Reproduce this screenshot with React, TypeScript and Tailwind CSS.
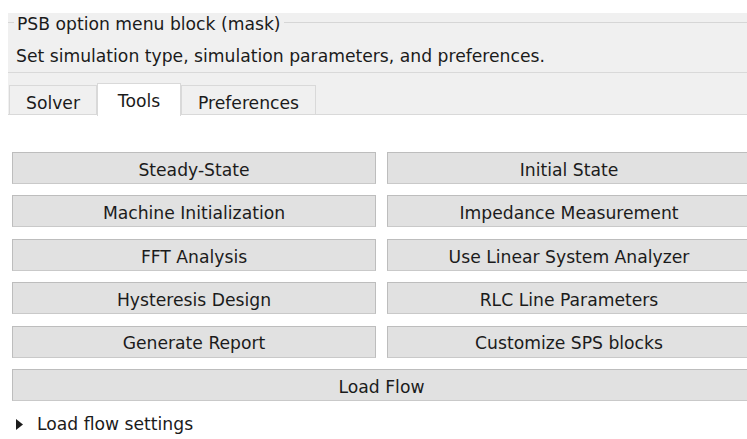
import { useState } from 'react'

const tools: string[][] = [
  ['Steady-State', 'Initial State'],
  ['Machine Initialization', 'Impedance Measurement'],
  ['FFT Analysis', 'Use Linear System Analyzer'],
  ['Hysteresis Design', 'RLC Line Parameters'],
  ['Generate Report', 'Customize SPS blocks'],
]

const tabs = ['Solver', 'Tools', 'Preferences']

function ToolButton({ label, wide }: { label: string; wide?: boolean }) {
  return (
    <button
      className={`h-[32px] pt-[5px] border border-[#bdbdbd] border-b-[#c9c9c9] bg-[#e1e1e1] text-[17.2px] text-[#1b1b1b] leading-none ${
        wide ? 'col-span-2' : ''
      }`}
    >
      {label}
    </button>
  )
}

export default function App() {
  const [active, setActive] = useState('Tools')
  const [open, setOpen] = useState(false)

  return (
    <div
      className="w-[747px] h-[439px] overflow-hidden bg-white text-[#1b1b1b]"
      style={{ fontFamily: '"DejaVu Sans", Tahoma, sans-serif' }}
    >
      {/* mask header group */}
      <div className="ml-[8px] mt-[13px] bg-[#f0f0f0]">
        <div className="flex items-center h-[18px]">
          <div className="w-[6px] h-px bg-[#d6d6d6] mt-[1px]" />
          <span className="px-[3px] pt-[5px] text-[17.2px] leading-none">PSB option menu block (mask)</span>
          <div className="flex-1 h-px bg-[#d6d6d6] mt-[1px]" />
        </div>
        <div className="h-[42px] border-b border-[#d9d9d9] flex items-center pl-[8px] pt-[10px] text-[17.2px]">
          Set simulation type, simulation parameters, and preferences.
        </div>

        {/* tab strip */}
        <div className="h-[42px] flex items-end border-b border-[#d9d9d9]">
          {tabs.map(t =>
            t === active ? (
              <div
                key={t}
                onClick={() => setActive(t)}
                className="h-[33px] -mb-[2px] w-[84px] bg-white border border-b-0 border-[#d9d9d9] flex items-center justify-center text-[17.2px] pt-[4px]"
              >
                {t}
              </div>
            ) : (
              <div
                key={t}
                onClick={() => setActive(t)}
                className={`h-[29px] bg-[#f0f0f0] border border-b-0 border-[#d9d9d9] flex items-center justify-center text-[17.2px] pt-[7px] ${
                  t === 'Solver' ? 'w-[88px] ml-px' : 'w-[135px]'
                }`}
              >
                {t}
              </div>
            )
          )}
        </div>
      </div>

      {/* tool buttons */}
      <div className="ml-[12px] mt-[37px] grid grid-cols-[364px_364px] gap-x-[11px] gap-y-[11.4px]">
        {tools.map(([a, b]) => (
          <>
            <ToolButton key={a} label={a} />
            <ToolButton key={b} label={b} />
          </>
        ))}
        <ToolButton label="Load Flow" wide />
      </div>

      <div
        className="mt-[11px] ml-[16px] flex items-center gap-[14px] text-[17.2px] cursor-pointer"
        onClick={() => setOpen(!open)}
      >
        <svg width="7" height="11" viewBox="0 0 7 11">
          <path d="M0 0 L7 5.5 L0 11 Z" fill="#1b1b1b" />
        </svg>
        <span>Load flow settings</span>
      </div>
    </div>
  )
}
